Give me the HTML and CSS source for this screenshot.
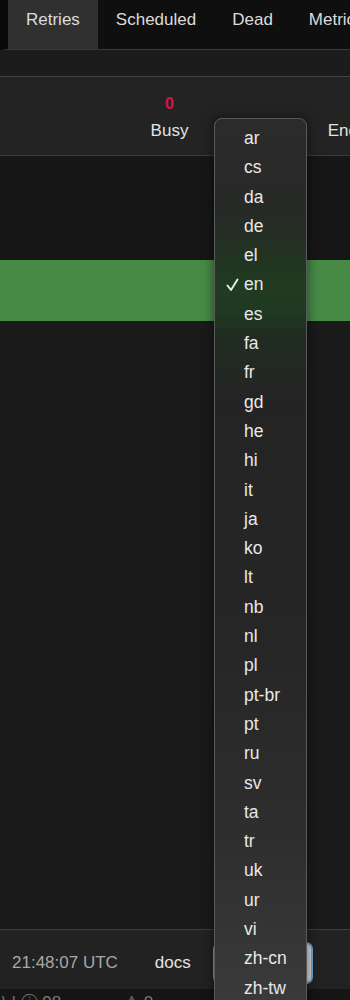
FILE: index.html
```html
<!DOCTYPE html>
<html lang="en">

<head>
    <meta charset="UTF-8">
    <meta name="viewport" content="width=device-width, initial-scale=1.0">
    <title>Sidekiq</title>
    <link rel="stylesheet" href="styles.css">
</head>

<body>
    <nav class="navbar">
        <a class="nav-tab active">Retries</a>
        <a class="nav-tab">Scheduled</a>
        <a class="nav-tab">Dead</a>
        <a class="nav-tab">Metrics</a>
    </nav>

    <div class="subbar"></div>

    <div class="stats">
        <div class="stat">
            <div class="stat-value">0</div>
            <div class="stat-label">Busy</div>
        </div>
        <div class="stat">
            <div class="stat-value">0</div>
            <div class="stat-label">Enqueued</div>
        </div>
    </div>

    <div class="idle-area"></div>
    <div class="status-bar"></div>
    <div class="main-area"></div>

    <footer class="footer">
        <span class="footer-time">21:48:07 UTC</span>
        <span class="footer-docs">docs</span>
        <div class="locale-select"></div>
    </footer>

    <div class="bottom-strip">
        <span class="strip-item strip-a">\ | ⓘ 98</span>
        <span class="strip-item strip-b">⚠ 0</span>
        <span class="strip-item strip-c">-- --</span>
        <span class="strip-item strip-d">--</span>
    </div>

    <!-- locale menu, opened over the page -->
    <ul class="locale-menu">
        <li>ar</li>
        <li>cs</li>
        <li>da</li>
        <li>de</li>
        <li>el</li>
        <li class="checked">
            <svg class="check" width="13" height="14" viewBox="0 0 13 14">
                <path d="M1.5 7.5 L5 12 L11.5 1.5" fill="none" stroke="#ececec" stroke-width="1.9" stroke-linecap="round" stroke-linejoin="round"/>
            </svg>en
        </li>
        <li>es</li>
        <li>fa</li>
        <li>fr</li>
        <li>gd</li>
        <li>he</li>
        <li>hi</li>
        <li>it</li>
        <li>ja</li>
        <li>ko</li>
        <li>lt</li>
        <li>nb</li>
        <li>nl</li>
        <li>pl</li>
        <li>pt-br</li>
        <li>pt</li>
        <li>ru</li>
        <li>sv</li>
        <li>ta</li>
        <li>tr</li>
        <li>uk</li>
        <li>ur</li>
        <li>vi</li>
        <li>zh-cn</li>
        <li>zh-tw</li>
    </ul>
</body>

</html>
```

FILE: styles.css
```css
body {
    font-family: "Liberation Sans", Arial, sans-serif;
    margin: 0;
    width: 350px;
    height: 1000px;
    overflow: hidden;
    position: relative;
    background-color: #1a1a1a;
    color: #dcdcdc;
}

.navbar {
    display: flex;
    height: 49px;
    background-color: #0f0f0f;
    border-left: 8px solid #090909;
    border-bottom: 1px solid #3a3a3a;
    overflow: hidden;
    white-space: nowrap;
}

.nav-tab {
    padding: 10px 18px 0;
    font-size: 17px;
    line-height: 20px;
    color: #dcdcdc;
}

.nav-tab.active {
    background-color: #303030;
}

.subbar {
    height: 26px;
    background-color: #1c1c1c;
    border-bottom: 1px solid #454545;
}

.stats {
    display: flex;
    height: 78px;
    padding-left: 71px;
    background-color: #232323;
    border-bottom: 1px solid #3a3a3a;
    overflow: hidden;
}

.stat {
    flex: 0 0 197px;
    text-align: center;
}

.stat-value {
    padding-top: 17px;
    font-size: 16px;
    line-height: 19px;
    font-weight: bold;
    color: #d8124c;
}

.stat-label {
    margin-top: 8px;
    font-size: 17px;
    line-height: 20px;
    color: #e2e2e2;
}

.idle-area {
    height: 104px;
    background-color: #161616;
}

.status-bar {
    height: 61px;
    background-color: #478a46;
}

.main-area {
    height: 608px;
    background-color: #1a1a1a;
}

.footer {
    display: flex;
    align-items: center;
    height: 53px;
    padding: 6px 0 0 12px;
    background-color: #222;
    border-top: 1px solid #3d3d3d;
    font-size: 17px;
}

.footer-time {
    color: #a8a8a8;
}

.footer-docs {
    margin-left: 37px;
    color: #e4e4e4;
}

.locale-select {
    width: 96px;
    height: 38px;
    margin-left: 22px;
    background-color: #d6d6d6;
    border: 2px solid #6aa3d8;
    border-radius: 7px;
}

.bottom-strip {
    position: relative;
    height: 20px;
    background-color: #151515;
    font-size: 17px;
    line-height: 20px;
    color: #7a7a7a;
}

.strip-item {
    position: absolute;
    top: 4px;
}

.strip-a { left: 2px; }
.strip-b { left: 124px; }
.strip-c { left: 193px; }
.strip-d { left: 318px; }

/* Locale menu */

.locale-menu {
    position: absolute;
    left: 214px;
    top: 118px;
    width: 91px;
    height: 920px;
    margin: 0;
    padding: 5px 0 0;
    list-style: none;
    border: 1px solid #5a5a5a;
    border-radius: 8px;
    box-shadow: 0 0 12px rgba(0, 0, 0, 0.55);
    background: linear-gradient(to bottom,
        #2b2b2b 0px,
        #272927 90px,
        #223322 135px,
        #1f3b20 165px,
        #203a21 190px,
        #202d21 215px,
        #242424 280px,
        #262626 520px,
        #2e2e2e 720px,
        #3a3a3a 880px);
}

.locale-menu li {
    position: relative;
    padding-left: 29px;
    font-size: 17.5px;
    line-height: 29.3px;
    color: #e8e8e8;
}

.check {
    position: absolute;
    left: 11px;
    top: 8px;
}
```
